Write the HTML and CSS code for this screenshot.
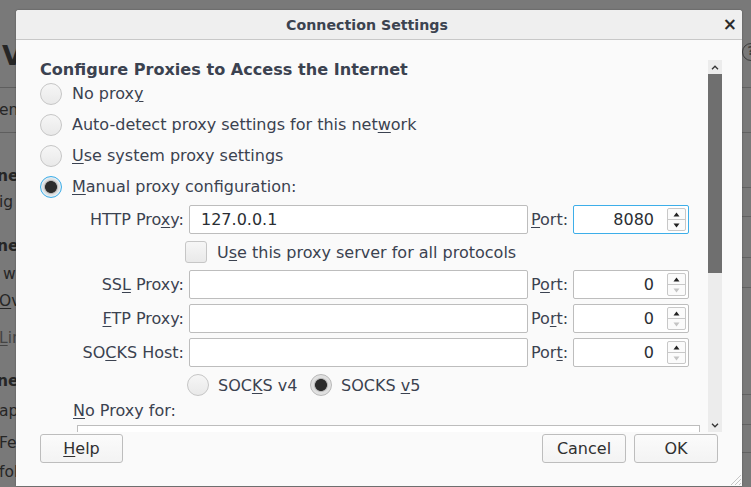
FILE: index.html
```html
<!DOCTYPE html>
<html>
<head>
<meta charset="utf-8">
<title>Connection Settings</title>
<link rel="stylesheet" href="styles.css">
</head>
<body>
<div class="screen">
  <div class="bg-left">
    <div class="bg-big"><span class="bg-bar"></span>V</div>
    <div class="bg-tab">en</div>
    <div class="bg-line b t163">ne</div>
    <div class="bg-line">ig</div>
    <div class="bg-line b t18">ne</div>
    <div class="bg-line t2 in4">w</div>
    <div class="bg-line t1"><u>O</u>v</div>
    <div class="bg-line t11 dim"><u>L</u>in</div>
    <div class="bg-line b t17">ne</div>
    <div class="bg-line t4">ap</div>
    <div class="bg-line t6">Fel</div>
    <div class="bg-line t3">fol</div>
  </div>

  <div class="dialog">
    <div class="titlebar">
      <span class="title">Connection Settings</span>
      <span class="close">×</span>
    </div>

    <div class="body">
      <div class="scrollarea">
        <div class="content">
          <div class="heading">Configure Proxies to Access the Internet</div>

          <label class="radio-row"><span class="radio"></span><span>No prox<u>y</u></span></label>
          <label class="radio-row"><span class="radio"></span><span>Auto-detect proxy settings for this net<u>w</u>ork</span></label>
          <label class="radio-row"><span class="radio"></span><span><u>U</u>se system proxy settings</span></label>
          <label class="radio-row"><span class="radio checked focus"></span><span><u>M</u>anual proxy configuration:</span></label>

          <div class="proxy-grid">
            <span class="lbl">HTTP Pro<u>x</u>y:</span>
            <div class="field">127.0.0.1</div>
            <span class="plbl"><u>P</u>ort:</span>
            <div class="spin focus">
              <span class="spin-val">8080</span>
              <span class="spin-btns">
                <span class="sb"><svg width="7" height="5" viewBox="0 0 7 5"><path d="M0.5 4.5 L3.5 0.5 L6.5 4.5 Z" fill="#222"/></svg></span>
                <span class="sb"><svg width="7" height="5" viewBox="0 0 7 5"><path d="M0.5 0.5 L3.5 4.5 L6.5 0.5 Z" fill="#222"/></svg></span>
              </span>
            </div>

            <label class="check-row"><span class="checkbox"></span><span>U<u>s</u>e this proxy server for all protocols</span></label>

            <span class="lbl">SS<u>L</u> Proxy:</span>
            <div class="field"></div>
            <span class="plbl">P<u>o</u>rt:</span>
            <div class="spin">
              <span class="spin-val">0</span>
              <span class="spin-btns">
                <span class="sb"><svg width="7" height="5" viewBox="0 0 7 5"><path d="M0.5 4.5 L3.5 0.5 L6.5 4.5 Z" fill="#222"/></svg></span>
                <span class="sb"><svg width="7" height="5" viewBox="0 0 7 5"><path d="M0.5 0.5 L3.5 4.5 L6.5 0.5 Z" fill="#c4c4c4"/></svg></span>
              </span>
            </div>

            <span class="lbl"><u>F</u>TP Proxy:</span>
            <div class="field"></div>
            <span class="plbl">Po<u>r</u>t:</span>
            <div class="spin">
              <span class="spin-val">0</span>
              <span class="spin-btns">
                <span class="sb"><svg width="7" height="5" viewBox="0 0 7 5"><path d="M0.5 4.5 L3.5 0.5 L6.5 4.5 Z" fill="#222"/></svg></span>
                <span class="sb"><svg width="7" height="5" viewBox="0 0 7 5"><path d="M0.5 0.5 L3.5 4.5 L6.5 0.5 Z" fill="#c4c4c4"/></svg></span>
              </span>
            </div>

            <span class="lbl">SO<u>C</u>KS Host:</span>
            <div class="field"></div>
            <span class="plbl">Por<u>t</u>:</span>
            <div class="spin">
              <span class="spin-val">0</span>
              <span class="spin-btns">
                <span class="sb"><svg width="7" height="5" viewBox="0 0 7 5"><path d="M0.5 4.5 L3.5 0.5 L6.5 4.5 Z" fill="#222"/></svg></span>
                <span class="sb"><svg width="7" height="5" viewBox="0 0 7 5"><path d="M0.5 0.5 L3.5 4.5 L6.5 0.5 Z" fill="#c4c4c4"/></svg></span>
              </span>
            </div>
          </div>

          <div class="socks-row">
            <label class="socks-opt first"><span class="radio"></span><span>SOC<u>K</u>S v4</span></label>
            <label class="socks-opt"><span class="radio checked"></span><span>SOCKS <u>v</u>5</span></label>
          </div>

          <div class="noproxy-lbl"><u>N</u>o Proxy for:</div>
          <div class="textarea"><span class="ta-text">localhost, 127.0.0.1</span></div>
        </div>

        <div class="scrollbar">
          <div class="sbtn"><svg width="8" height="5" viewBox="0 0 8 5"><path d="M1 4.2 L4 1.2 L7 4.2" fill="none" stroke="#333" stroke-width="1.3"/></svg></div>
          <div class="thumb"></div>
          <div class="track"></div>
          <div class="sbtn down"><svg width="8" height="5" viewBox="0 0 8 5"><path d="M1 0.8 L4 3.8 L7 0.8" fill="none" stroke="#333" stroke-width="1.3"/></svg></div>
        </div>
      </div>
    </div>

    <div class="footer">
      <button class="btn"><u>H</u>elp</button>
      <div class="btn-group">
        <button class="btn">Cancel</button>
        <button class="btn">OK</button>
      </div>
    </div>

    <svg class="grip" width="14" height="14" viewBox="0 0 14 14">
      <path d="M13 3 L3 13 M13 7 L7 13 M13 11 L11 13" stroke="#c6c6c6" stroke-width="1"/>
    </svg>
  </div>

  <div class="bg-right">
    <div class="help-ic">?</div>
    <div class="rl h88"></div>
    <div class="rl h45"></div>
    <div class="rl h55"></div>
    <div class="rl h29"></div>
    <div class="rl h41"></div>
    <div class="rl h30"></div>
    <div class="rl h107"></div>
    <div class="rl h30"></div>
    <div class="rl h28"></div>
  </div>
</div>
</body>
</html>
```

FILE: styles.css
```css
* { box-sizing: border-box; }
html, body { margin: 0; padding: 0; }
body {
  font-family: "DejaVu Sans", "Liberation Sans", sans-serif;
  font-size: 16px;
  color: #3b4250;
}
u { text-decoration: underline; text-underline-offset: 2px; text-decoration-thickness: 1px; }

.screen {
  display: flex;
  width: 751px;
  height: 487px;
  background: #797979;
  overflow: hidden;
}

/* ---------- background page (dimmed) ---------- */
.bg-left {
  width: 16px;
  flex-shrink: 0;
  overflow: hidden;
  color: #262626;
  font-size: 15.5px;
  white-space: nowrap;
}
.bg-big {
  margin-top: 40px;
  height: 48px;
  border-bottom: 1px solid #5e5e5e;
  font-size: 27px;
  font-weight: bold;
  line-height: 28px;
  padding-top: 2px;
  display: flex;
  align-items: flex-start;
  gap: 2px;
}
.bg-bar { display: inline-block; width: 2px; height: 22px; background: #3a3a3a; margin-top: 3px; }
.bg-tab {
  height: 45px;
  line-height: 44px;
  border-bottom: 1px solid #5e5e5e;
  margin-left: -1px;
}
.bg-line { height: 26px; line-height: 26px; margin-left: -1px; }
.bg-line.b { font-weight: bold; margin-left: -3px; }
.bg-line.dim { color: #444; }
.t163 { margin-top: 30px; }
.t18 { margin-top: 18px; }
.t2 { margin-top: 2px; }
.t1 { margin-top: 1px; }
.t11 { margin-top: 11px; }
.t17 { margin-top: 17px; }
.t4 { margin-top: 4px; }
.t6 { margin-top: 6px; }
.t3 { margin-top: 3px; }
.in4 { padding-left: 4px; }

.bg-right {
  width: 9px;
  flex-shrink: 0;
  overflow: hidden;
}
.help-ic {
  margin-top: 43px;
  width: 18px;
  height: 18px;
  border: 1.5px solid #3d3d3d;
  border-radius: 50%;
  font-size: 12px;
  font-weight: bold;
  line-height: 15px;
  text-align: center;
  color: #3d3d3d;
}
.rl { border-bottom: 1px solid #626262; }
.h88 { height: 27px; }
.h45 { height: 45px; }
.h55 { height: 55px; }
.h29 { height: 29px; }
.h41 { height: 41px; }
.h30 { height: 30px; }
.h107 { height: 107px; }
.h28 { height: 28px; }

/* ---------- dialog ---------- */
.dialog {
  position: relative;
  width: 726px;
  height: 476px;
  margin-top: 10px;
  flex-shrink: 0;
  background: #fafafa;
  border-radius: 3px 3px 0 0;
  display: flex;
  flex-direction: column;
  box-shadow: 0 0 2px rgba(0,0,0,0.35);
}
.titlebar {
  height: 30px;
  flex-shrink: 0;
  background: #efefef;
  border-bottom: 1px solid #c8c8c8;
  border-radius: 3px 3px 0 0;
  display: flex;
  align-items: center;
}
.title {
  flex: 1;
  text-align: center;
  font-size: 14.2px;
  font-weight: bold;
  color: #3c4350;
  padding-top: 1px;
}
.close {
  width: 24px;
  padding-right: 5px;
  text-align: right;
  font-size: 17px;
  font-weight: bold;
  color: #2b2b2b;
  line-height: 17px;
}

.body {
  padding: 20px 20px 0 24px;
  flex-shrink: 0;
}
.scrollarea {
  height: 372px;
  display: flex;
}
.content {
  flex: 1;
  overflow: hidden;
}
.heading {
  font-size: 16.1px;
  font-weight: bold;
  line-height: 18px;
  height: 18px;
  padding-top: 1px;
  color: #3b4250;
}
.radio-row {
  height: 31px;
  display: flex;
  align-items: center;
  gap: 10px;
}
.radio {
  width: 22px;
  height: 22px;
  flex-shrink: 0;
  border-radius: 50%;
  border: 1px solid #c6c6c6;
  background: linear-gradient(#f6f6f6, #e9e9e9);
}
.radio.checked {
  border-color: #b8b8b8;
  background: radial-gradient(circle, #2c2c2c 0 5.6px, #a9a9a9 6.2px, #dedede 7.4px, #e9e9e9 100%);
}
.radio.checked.focus {
  border-color: #3daee9;
  box-shadow: inset 0 0 0 1px #dff1fb;
}

.proxy-grid {
  margin-top: 3px;
  margin-left: 33px;
  display: grid;
  grid-template-columns: 112px 339px 37px 116px;
  grid-template-rows: 29px 26px 29px 29px 29px;
  column-gap: 4px;
  row-gap: 5px;
  align-items: center;
}
.lbl { text-align: right; padding-right: 1px; white-space: nowrap; }
.plbl { white-space: nowrap; margin-left: -1px; }
.field {
  height: 29px;
  background: #fff;
  border: 1px solid #bdbdbd;
  border-radius: 2px;
  padding-left: 11px;
  line-height: 27px;
  color: #2a2e33;
}
.spin {
  height: 29px;
  background: #fff;
  border: 1px solid #bdbdbd;
  border-radius: 2px;
  display: flex;
  align-items: center;
  color: #2a2e33;
}
.spin.focus { border-color: #3daee9; }
.spin-val { flex: 1; text-align: right; padding-right: 13px; line-height: 27px; }
.spin-btns {
  width: 19px;
  height: 23px;
  margin-right: 2px;
  display: flex;
  flex-direction: column;
  border: 1px solid #c8c8c8;
  border-radius: 2px;
  background: #fbfbfb;
}
.sb {
  flex: 1;
  display: flex;
  align-items: center;
  justify-content: center;
}
.sb + .sb { border-top: 1px solid #c8c8c8; }
.sb svg { display: block; }

.check-row {
  grid-column: 2 / 5;
  margin-left: -4px;
  display: flex;
  align-items: center;
  gap: 10px;
}
.checkbox {
  width: 22px;
  height: 22px;
  border: 1px solid #c6c6c6;
  border-radius: 3px;
  background: linear-gradient(#f6f6f6, #e9e9e9);
}

.socks-row {
  margin-top: 5px;
  margin-left: 147px;
  height: 26px;
  display: flex;
  align-items: center;
}
.socks-opt { display: flex; align-items: center; gap: 9px; }
.socks-opt.first { width: 123px; }

.noproxy-lbl {
  margin-left: 33px;
  height: 26px;
  line-height: 26px;
}
.textarea {
  margin-top: 1px;
  margin-left: 37px;
  width: 623px;
  height: 60px;
  background: #fff;
  border: 1px solid #bdbdbd;
  padding: 4px 10px;
  line-height: 20px;
  color: #2a2e33;
}

.scrollbar {
  width: 14px;
  flex-shrink: 0;
  display: flex;
  flex-direction: column;
  background: #ececec;
}
.sbtn {
  height: 14px;
  display: flex;
  align-items: center;
  justify-content: center;
  background: #ececec;
}
.sbtn.down { height: 12px; align-items: flex-start; padding-top: 3px; }
.thumb { height: 199px; background: #6f6f6f; }
.track { flex: 1; }

.footer {
  padding: 2px 24px 0 24px;
  display: flex;
  justify-content: space-between;
}
.btn-group { display: flex; gap: 8px; }
.btn {
  font-family: "DejaVu Sans", "Liberation Sans", sans-serif;
  font-size: 16px;
  color: #303030;
  height: 29px;
  width: 84px;
  padding: 0;
  background: linear-gradient(#fbfbfb, #f3f3f3);
  border: 1px solid #bdbdbd;
  border-radius: 3px;
}
.footer > .btn { width: 83px; }

.grip {
  position: absolute;
  right: 0;
  bottom: 0;
}
```
